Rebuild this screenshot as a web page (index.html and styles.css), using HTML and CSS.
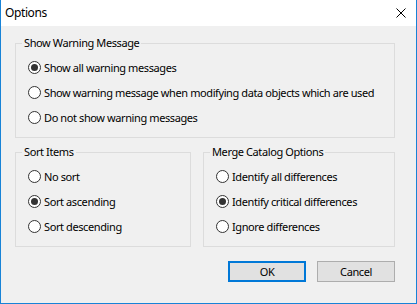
FILE: index.html
```html
<!DOCTYPE html>
<html lang="en">
<head>
    <meta charset="UTF-8">
    <meta name="viewport" content="width=device-width, initial-scale=1.0">
    <title>Options</title>
    <link rel="stylesheet" href="styles.css">
</head>
<body>

    <div class="window">
        <div class="titlebar">
            <span class="title">Options</span>
            <svg class="close" width="10" height="10" viewBox="0 0 10 10">
                <path d="M0.5 0.5 L9.5 9.5 M9.5 0.5 L0.5 9.5" stroke="#000" stroke-width="1" fill="none"/>
            </svg>
        </div>

        <div class="client">
            <fieldset class="group">
                <legend>Show Warning Message</legend>
                <label class="option"><input type="radio" name="warn" checked> Show all warning messages</label>
                <label class="option"><input type="radio" name="warn"> Show warning message when modifying data objects which are used</label>
                <label class="option"><input type="radio" name="warn"> Do not show warning messages</label>
            </fieldset>

            <div class="row">
                <fieldset class="group sort">
                    <legend>Sort Items</legend>
                    <label class="option"><input type="radio" name="sort"> No sort</label>
                    <label class="option"><input type="radio" name="sort" checked> Sort ascending</label>
                    <label class="option"><input type="radio" name="sort"> Sort descending</label>
                </fieldset>

                <fieldset class="group merge">
                    <legend>Merge Catalog Options</legend>
                    <label class="option"><input type="radio" name="merge"> Identify all differences</label>
                    <label class="option"><input type="radio" name="merge" checked> Identify critical differences</label>
                    <label class="option"><input type="radio" name="merge"> Ignore differences</label>
                </fieldset>
            </div>

            <div class="buttons">
                <button class="btn default">OK</button>
                <button class="btn">Cancel</button>
            </div>
        </div>
    </div>

</body>
</html>
```

FILE: styles.css
```css
* {
    box-sizing: border-box;
}
body {
    margin: 0;
    font-family: "Noto Sans", sans-serif;
    font-size: 11px;
    letter-spacing: -0.4px;
    color: #000;
}
.window {
    width: 417px;
    height: 304px;
    border: 1px solid #1883d7;
    border-top: none;
    background-color: #f0f0f0;
    display: flex;
    flex-direction: column;
}
.titlebar {
    height: 26px;
    background-color: #fff;
    display: flex;
    align-items: center;
    justify-content: space-between;
    padding: 0 10px 0 4px;
}
.title {
    font-size: 12px;
    line-height: 16px;
}
.close {
    display: block;
}
.client {
    padding: 9px 21px 0 14px;
    display: flex;
    flex-direction: column;
}
.group {
    margin: 0;
    padding: 4px 0 7px 12px;
    border: 1px solid #dcdcdc;
    min-width: 0;
    display: flex;
    flex-direction: column;
}
.group legend {
    margin-left: -6px;
    padding: 0 2px;
    line-height: 16px;
}
.row {
    display: flex;
    gap: 12px;
    margin-top: 6px;
}
.sort {
    width: 176px;
}
.merge {
    flex: 1;
}
.option {
    height: 25px;
    display: flex;
    align-items: center;
    white-space: nowrap;
}
.option input {
    appearance: none;
    -webkit-appearance: none;
    width: 13px;
    height: 13px;
    margin: 0 3px 0 0;
    border: 1px solid #333;
    border-radius: 50%;
    background-color: #fff;
    display: flex;
    align-items: center;
    justify-content: center;
    flex-shrink: 0;
}
.option input:checked::after {
    content: "";
    width: 7px;
    height: 7px;
    border-radius: 50%;
    background-color: #333;
}
.buttons {
    display: flex;
    justify-content: flex-end;
    gap: 11px;
    margin-top: 14px;
}
.btn {
    width: 78px;
    height: 21px;
    padding: 0;
    font-family: inherit;
    font-size: 11px;
    letter-spacing: inherit;
    color: #000;
    background-color: #e1e1e1;
    border: 1px solid #adadad;
}
.btn.default {
    border: 2px solid #0078d7;
}
```
